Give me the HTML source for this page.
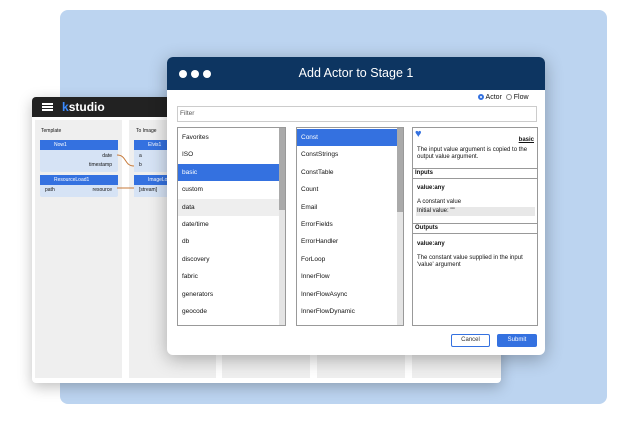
<!DOCTYPE html>
<html><head><style>
*{box-sizing:border-box;margin:0;padding:0}
body{width:620px;height:424px;background:#fff;position:relative;overflow:hidden;font-family:"Liberation Sans",sans-serif}
.abs{position:absolute}
.bg{left:60px;top:10px;width:547px;height:394px;background:#bcd4f0;border-radius:8px}
.back{left:32px;top:97px;width:469px;height:286px;background:#fff;border-radius:4px;box-shadow:0 4px 14px rgba(0,0,0,.25);overflow:hidden}
.bh{left:0;top:0;width:469px;height:20px;background:#222}
.col{top:23px;height:258px;background:#efefef}
.dlg{left:167px;top:57px;width:378px;height:298px;background:#fff;border-radius:6px;box-shadow:0 4px 18px rgba(0,0,0,.3);overflow:hidden}
.dh{left:0;top:0;width:378px;height:33px;background:#0d3561;color:#fff;font-size:12.5px;text-align:center;line-height:33px}
.dot{width:8px;height:8px;border-radius:50%;background:#fff;top:13px}
.list{border:1px solid #999;overflow:hidden;background:#fff;padding-top:1px}
.row{height:17.4px;font-size:6.5px;line-height:17.4px;padding-left:4px;color:#111}
.sel{background:#3471e0;color:#fff}
.sb{position:absolute;right:0;top:0;width:6px;height:100%;background:#e4e4e4}
.sbt{position:absolute;right:0;width:6px;background:#aaa}
.t{font-size:6px;color:#111;position:absolute}
.node{background:#3471e0;color:#fff;font-size:5px;line-height:10px;padding-left:14px;height:10px}
</style></head><body>
<div class="abs bg"></div>
<div class="abs back">
 <div class="abs bh"></div>
 <div class="abs" style="left:10px;top:6px;width:11px;height:2px;background:#fff;box-shadow:0 3px 0 #fff,0 6px 0 #fff"></div>
 <div class="abs" style="left:30px;top:3px;color:#fff;font-size:12px;font-weight:bold"><span style="color:#3b8bff">k</span>studio</div>
 <div class="abs col" style="left:3px;width:87px"></div>
 <div class="abs col" style="left:97px;width:87px"></div>
 <div class="abs col" style="left:190px;width:88px"></div>
 <div class="abs col" style="left:285px;width:88px"></div>
 <div class="abs col" style="left:380px;width:89px"></div>
 <div class="t" style="left:9px;top:31px;font-size:5px">Template</div>
 <div class="t" style="left:104px;top:31px;font-size:5px">To Image</div>
 <div class="abs" style="left:8px;top:43px;width:78px;height:32px;background:#d6e3f5;border-radius:2px"><div class="node">Now1</div><div class="t" style="right:6px;top:13px;font-size:5px">date</div><div class="t" style="right:6px;top:22px;font-size:5px">timestamp</div></div>
 <div class="abs" style="left:8px;top:78px;width:78px;height:22px;background:#d6e3f5;border-radius:2px"><div class="node">ResourceLoad1</div><div class="t" style="left:5px;top:12px;font-size:5px">path</div><div class="t" style="right:6px;top:12px;font-size:5px">resource</div></div>
 <div class="abs" style="left:102px;top:43px;width:40px;height:32px;background:#d6e3f5"><div class="node">Elvis1</div><div class="t" style="left:5px;top:13px;font-size:5px">a</div><div class="t" style="left:5px;top:22px;font-size:5px">b</div></div>
 <div class="abs" style="left:102px;top:78px;width:40px;height:22px;background:#d6e3f5"><div class="node">ImageLo</div><div class="t" style="left:5px;top:12px;font-size:5px">[stream]</div></div>
 <svg class="abs" style="left:80px;top:55px" width="30" height="40"><path d="M5 3 C15 3,12 14,22 14" stroke="#c77a3a" fill="none"/><path d="M5 36 C14 36,12 36,22 36" stroke="#c77a3a" fill="none"/></svg>
</div>
<div class="abs dlg">
 <div class="abs dh">Add Actor to Stage 1</div>
 <div class="abs dot" style="left:12px"></div><div class="abs dot" style="left:24px"></div><div class="abs dot" style="left:36px"></div>
 <div class="t" style="left:311px;top:37px;font-size:7px"><span style="display:inline-block;width:6px;height:6px;border-radius:50%;border:2px solid #3471e0;vertical-align:-1px"></span> Actor &nbsp;<span style="display:inline-block;width:6px;height:6px;border-radius:50%;border:1px solid #888;vertical-align:-1px"></span> Flow</div>
 <div class="abs" style="left:10px;top:49px;width:360px;height:16px;border:1px solid #ccc;font-size:6.5px;line-height:14px;padding-left:2px;color:#555">Filter</div>
 <div class="abs list" style="left:10px;top:70px;width:109px;height:199px">
  <div class="row">Favorites</div><div class="row">ISO</div><div class="row sel">basic</div><div class="row">custom</div><div class="row" style="background:#eee">data</div><div class="row">date/time</div><div class="row">db</div><div class="row">discovery</div><div class="row">fabric</div><div class="row">generators</div><div class="row">geocode</div><div class="row">…</div>
  <div class="sb"><div class="sbt" style="top:0;height:82px"></div></div>
 </div>
 <div class="abs list" style="left:129px;top:70px;width:108px;height:199px">
  <div class="row sel">Const</div><div class="row">ConstStrings</div><div class="row">ConstTable</div><div class="row">Count</div><div class="row">Email</div><div class="row">ErrorFields</div><div class="row">ErrorHandler</div><div class="row">ForLoop</div><div class="row">InnerFlow</div><div class="row">InnerFlowAsync</div><div class="row">InnerFlowDynamic</div><div class="row">…</div>
  <div class="sb"><div class="sbt" style="top:0;height:84px"></div></div>
 </div>
 <div class="abs list" style="left:245px;top:70px;width:126px;height:199px">
  <div class="t" style="left:2px;top:0px;color:#3471e0;font-size:11px">♥</div>
  <div class="t" style="right:3px;top:9px;font-weight:bold;text-decoration:underline">basic</div>
  <div class="t" style="left:4px;top:19px;width:118px;line-height:7px">The input value argument is copied to the output value argument.</div>
  <div class="abs" style="left:0;top:40px;width:124px;height:11px;border-top:1px solid #999;border-bottom:1px solid #999"></div>
  <div class="t" style="left:2px;top:42px;font-weight:bold">Inputs</div>
  <div class="t" style="left:4px;top:57px;font-weight:bold">value:any</div>
  <div class="t" style="left:4px;top:71px">A constant value</div>
  <div class="abs" style="left:3px;top:79px;width:119px;height:9px;background:#e8e8e8"></div>
  <div class="t" style="left:4px;top:80px">Initial value: ""</div>
  <div class="abs" style="left:0;top:95px;width:124px;height:11px;border-top:1px solid #999;border-bottom:1px solid #999"></div>
  <div class="t" style="left:2px;top:97px;font-weight:bold">Outputs</div>
  <div class="t" style="left:4px;top:113px;font-weight:bold">value:any</div>
  <div class="t" style="left:4px;top:127px;width:118px;line-height:7px">The constant value supplied in the input 'value' argument</div>
 </div>
 <div class="abs" style="left:284px;top:277px;width:39px;height:13px;border:1px solid #3471e0;border-radius:2px;font-size:6px;text-align:center;line-height:11px;color:#333">Cancel</div>
 <div class="abs" style="left:330px;top:277px;width:40px;height:13px;background:#3471e0;border-radius:2px;font-size:6px;text-align:center;line-height:13px;color:#fff">Submit</div>
</div>
</body></html>
